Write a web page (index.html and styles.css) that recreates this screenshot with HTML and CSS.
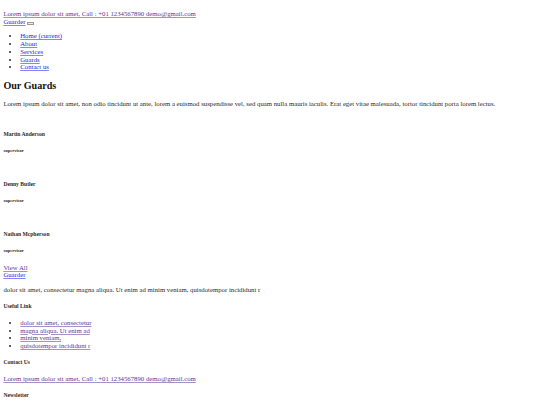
FILE: index.html
```html
<!DOCTYPE html>
<html>
<head>
<meta charset="utf-8">
<title>Guarder</title>
<link rel="stylesheet" href="styles.css">
</head>
<body class="body">
<header class="topbar">
  <div class="contact-line"><a class="link visited" href="#">Lorem ipsum dolor sit amet, Call : +01 1234567890 demo@gmail.com</a></div>
  <nav class="navbar">
    <a class="link brand" href="#">Guarder</a> <button class="toggler" type="button"></button>
    <ul class="menu">
      <li><a class="link" href="#">Home (current)</a></li>
      <li><a class="link" href="#">About</a></li>
      <li><a class="link" href="#">Services</a></li>
      <li><a class="link" href="#">Guards</a></li>
      <li><a class="link" href="#">Contact us</a></li>
    </ul>
  </nav>
</header>
<section class="guards">
  <h2 class="section-title">Our Guards</h2>
  <p class="lead">Lorem ipsum dolor sit amet, non odio tincidunt ut ante, lorem a euismod suspendisse vel, sed quam nulla mauris iaculis. Erat eget vitae malesuada, tortor tincidunt porta lorem lectus.</p>
  <div class="guard">
    <div class="guard-img"></div>
    <h5 class="guard-name">Martin Anderson</h5>
    <h6 class="guard-role">supervisor</h6>
  </div>
  <div class="guard">
    <div class="guard-img"></div>
    <h5 class="guard-name">Denny Butler</h5>
    <h6 class="guard-role">supervisor</h6>
  </div>
  <div class="guard">
    <div class="guard-img"></div>
    <h5 class="guard-name">Nathan Mcpherson</h5>
    <h6 class="guard-role">supervisor</h6>
  </div>
  <div class="view-all"><a class="link visited" href="#">View All</a></div>
</section>
<footer class="footer">
  <div class="footer-brand"><a class="link" href="#">Guarder</a></div>
  <p class="footer-text">dolor sit amet, consectetur magna aliqua. Ut enim ad minim veniam, quisdotempor incididunt r</p>
  <h5 class="footer-title">Useful Link</h5>
  <ul class="footer-links">
    <li><a class="link visited" href="#">dolor sit amet, consectetur</a></li>
    <li><a class="link visited" href="#">magna aliqua. Ut enim ad</a></li>
    <li><a class="link visited" href="#">minim veniam,</a></li>
    <li><a class="link visited" href="#">quisdotempor incididunt r</a></li>
  </ul>
  <h5 class="footer-title">Contact Us</h5>
  <p class="footer-contact"><a class="link visited" href="#">Lorem ipsum dolor sit amet, Call : +01 1234567890 demo@gmail.com</a></p>
  <h5 class="footer-title">Newsletter</h5>
</footer>
</body>
</html>
```

FILE: styles.css
```css
html {
  background: #ffffff;
}

.body {
  margin: 3.375px;
  font-family: "Liberation Serif", "Times New Roman", serif;
  font-size: 6.75px;
  line-height: 7.76px;
  color: #2a2a2a;
}

.link {
  color: #2424e8;
  text-decoration: underline;
  text-decoration-color: rgba(36, 36, 232, 0.55);
}

.link.visited {
  color: #633596;
  text-decoration-color: rgba(99, 53, 150, 0.55);
}

.topbar {
  padding-top: 6.75px;
}

.toggler {
  display: inline-block;
  width: 6.75px;
  height: 2.5px;
  padding: 0;
  margin: 0;
  border: 0.5px solid #9a9a9a;
  background: #efefef;
  vertical-align: baseline;
}

.menu {
  margin: 6.75px 0;
  padding-left: 16.875px;
}

.section-title {
  font-size: 10.125px;
  line-height: 11.64px;
  font-weight: bold;
  margin: 8.4px 0;
  color: #111111;
}

.lead {
  margin: 6.75px 0;
}

.guard-img {
  height: 7.76px;
}

.guard-name {
  font-size: 5.6px;
  line-height: 6.44px;
  font-weight: bold;
  margin: 9.36px 0;
}

.guard-role {
  font-size: 4.52px;
  line-height: 5.2px;
  font-weight: bold;
  margin: 10.54px 0;
}

.footer-text {
  margin: 6.75px 0;
}

.footer-title {
  font-size: 5.6px;
  line-height: 6.44px;
  font-weight: bold;
  margin: 9.36px 0;
}

.footer-links {
  margin: 6.75px 0;
  padding-left: 16.875px;
}

.footer-contact {
  margin: 6.75px 0;
}
```
